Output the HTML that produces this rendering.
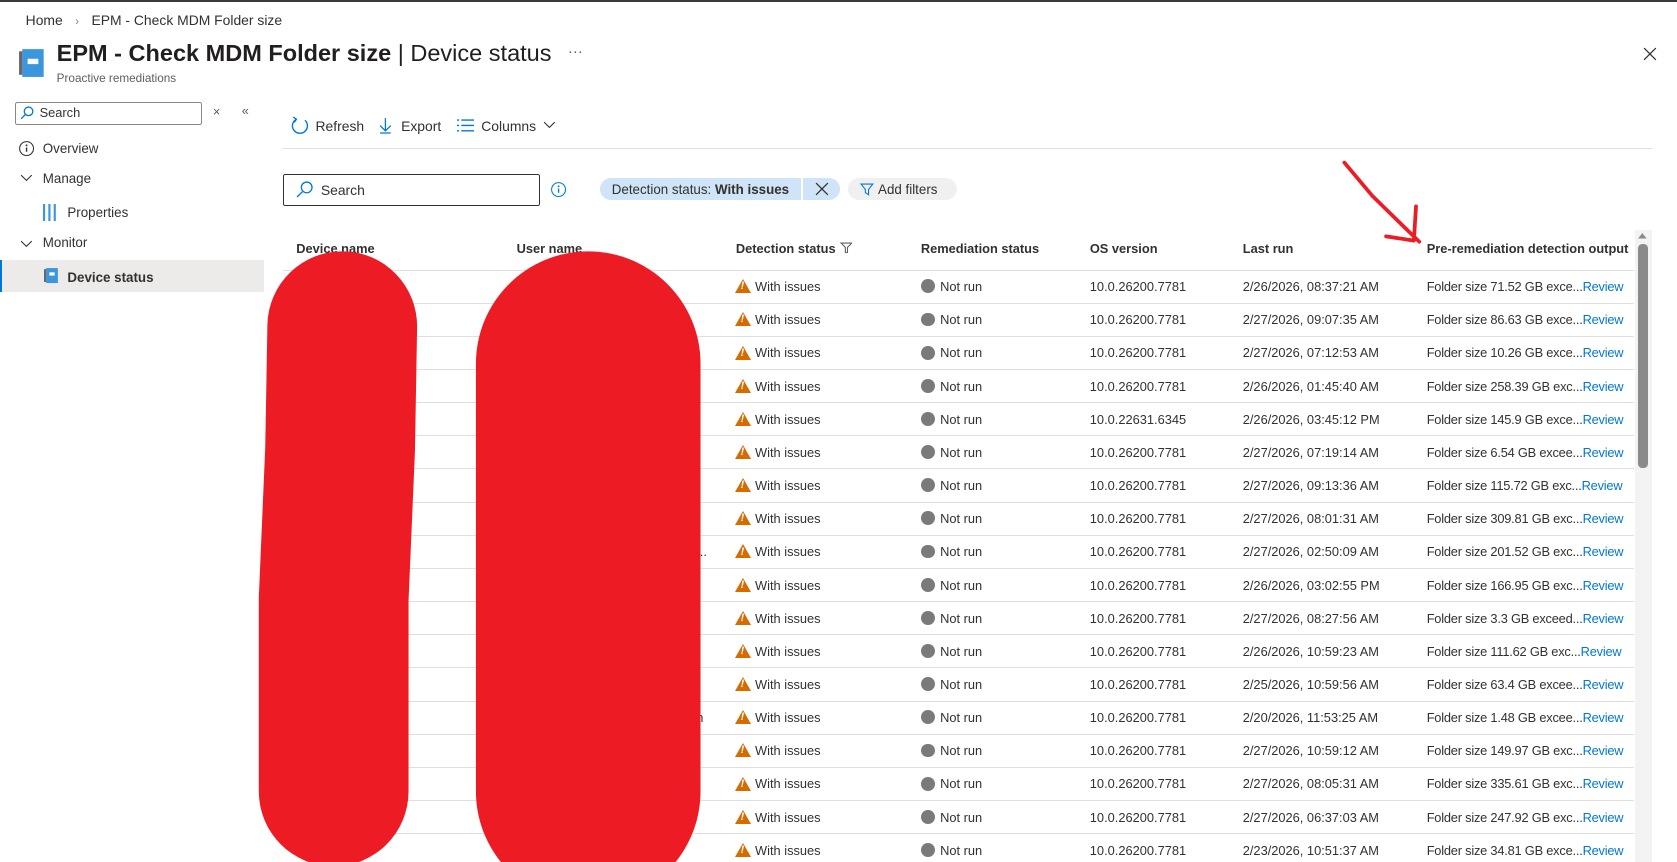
<!DOCTYPE html>
<html><head><meta charset="utf-8"><style>
html,body{margin:0;padding:0;background:#fff;overflow:hidden;width:1677px;height:862px}
#w{zoom:1.0695;position:relative;width:1568px;height:806px;font-family:"Liberation Sans",sans-serif;color:#323130;font-size:12px}
.a{position:absolute;white-space:nowrap}
.row{position:absolute;left:265px;width:1263px;height:31px;border-bottom:1px solid #e1dfdd;box-sizing:border-box}
.row span{position:absolute;top:8px;white-space:nowrap}
.warn{display:inline-block;width:0;height:0;border-left:8px solid transparent;border-right:8px solid transparent;border-bottom:14px solid #d86b00;vertical-align:-2px;margin-right:4px;position:relative}
.warn:after{content:"!";position:absolute;left:-2px;top:1px;color:#fff;font-size:10px;font-weight:bold}
.dot{display:inline-block;width:13px;height:13px;border-radius:50%;background:#7a7a7a;vertical-align:-2px;margin-right:5px}
.rv{color:#0078d4;font-weight:normal}
.o{letter-spacing:-0.2px}
</style></head><body><div id="w">
<div class="a" style="left:0;top:0;width:1568px;height:2px;background:#3b3b3b"></div>
<div class="a" style="left:24px;top:11px;font-size:13px">Home <span style="color:#8a8886;margin:0 8px;font-size:11px">›</span> EPM - Check MDM Folder size</div>
<svg class="a" style="left:17px;top:44px" width="26" height="30"><rect x="4" y="2" width="20" height="26" fill="#3a96dd"/><rect x="1" y="4" width="3" height="22" fill="#666"/><rect x="9" y="11" width="10" height="5" fill="#fff"/></svg>
<div class="a" style="left:53px;top:37px;font-size:22px;color:#201f1e"><b>EPM - Check MDM Folder size</b> | Device status</div>
<div class="a" style="left:53px;top:67px;font-size:11px;color:#605e5c">Proactive remediations</div>
<div class="a" style="left:531px;top:40px;font-size:14px;color:#605e5c">···</div>
<svg class="a" style="left:1536px;top:44px" width="13" height="13"><path d="M1 1L12 12M12 1L1 12" stroke="#323130" stroke-width="1.2"/></svg>
<div class="a" style="left:14px;top:95px;width:173px;height:20px;border:1px solid #8a8886;border-radius:2px"></div>
<svg class="a" style="left:19px;top:99px" width="13" height="13"><circle cx="8" cy="5" r="4" fill="none" stroke="#0078d4" stroke-width="1.2"/><path d="M5 8L1 12" stroke="#0078d4" stroke-width="1.2"/></svg>
<div class="a" style="left:37px;top:98px;font-size:12px">Search</div>
<div class="a" style="left:199px;top:97px;color:#605e5c">×</div>
<div class="a" style="left:226px;top:96px;color:#605e5c">«</div>
<svg class="a" style="left:17px;top:131px" width="16" height="16"><circle cx="8" cy="8" r="6.5" fill="none" stroke="#323130"/><path d="M8 7v4" stroke="#323130" stroke-width="1.3"/><circle cx="8" cy="5" r=".9" fill="#323130"/></svg>
<div class="a" style="left:40px;top:132px;font-size:12.5px">Overview</div>
<svg class="a" style="left:19px;top:163px" width="12" height="8"><path d="M1 1L6 6L11 1" fill="none" stroke="#323130"/></svg>
<div class="a" style="left:40px;top:160px;font-size:12.5px">Manage</div>
<svg class="a" style="left:40px;top:191px" width="12" height="16"><rect x="0" y="0" width="2" height="16" fill="#3a96dd"/><rect x="5" y="0" width="2" height="16" fill="#3a96dd"/><rect x="10" y="0" width="2" height="16" fill="#3a96dd"/></svg>
<div class="a" style="left:63px;top:192px;font-size:12.5px">Properties</div>
<svg class="a" style="left:19px;top:224px" width="12" height="8"><path d="M1 1L6 6L11 1" fill="none" stroke="#323130"/></svg>
<div class="a" style="left:40px;top:220px;font-size:12.5px">Monitor</div>
<div class="a" style="left:0;top:243px;width:247px;height:30px;background:#edebe9;border-left:2px solid #0078d4;box-sizing:border-box"></div>
<svg class="a" style="left:41px;top:250px" width="13" height="16"><rect x="2" y="1" width="11" height="14" fill="#3a96dd"/><rect x="0" y="2" width="2" height="12" fill="#666"/><rect x="5" y="5" width="5" height="3" fill="#fff"/></svg>
<div class="a" style="left:63px;top:252px;font-size:12.5px"><b style="font-weight:600">Device status</b></div>
<svg class="a" style="left:271px;top:108px" width="18" height="18"><path d="M14 4A7 7 0 1 1 6 3" fill="none" stroke="#0078d4" stroke-width="1.3"/><path d="M3 1L6 3L4 6" fill="none" stroke="#0078d4" stroke-width="1.3"/></svg>
<div class="a" style="left:295px;top:110px;font-size:13px">Refresh</div>
<svg class="a" style="left:354px;top:109px" width="12" height="16"><path d="M6 1V13M1 8L6 13L11 8M1 15H11" fill="none" stroke="#0078d4" stroke-width="1.2"/></svg>
<div class="a" style="left:375px;top:110px;font-size:13px">Export</div>
<svg class="a" style="left:427px;top:111px" width="16" height="12"><path d="M0 1H2M4 1H16M0 6H2M4 6H16M0 11H2M4 11H16" stroke="#0078d4" stroke-width="1.3"/></svg>
<div class="a" style="left:450px;top:110px;font-size:13px">Columns</div>
<svg class="a" style="left:508px;top:113px" width="12" height="8"><path d="M1 1L6 6L11 1" fill="none" stroke="#323130"/></svg>
<div class="a" style="left:265px;top:138px;width:1280px;height:1px;background:#e1dfdd"></div>
<div class="a" style="left:265px;top:163px;width:238px;height:28px;border:1px solid #323130;border-radius:2px"></div>
<svg class="a" style="left:277px;top:169px" width="16" height="16"><circle cx="10" cy="6" r="5" fill="none" stroke="#0078d4" stroke-width="1.2"/><path d="M6 10L1 15" stroke="#0078d4" stroke-width="1.3"/></svg>
<div class="a" style="left:300px;top:170px;font-size:13px">Search</div>
<svg class="a" style="left:514px;top:169px" width="16" height="16"><circle cx="8" cy="8" r="6.5" fill="none" stroke="#0078d4"/><path d="M8 7v4" stroke="#0078d4" stroke-width="1.3"/><circle cx="8" cy="5" r=".9" fill="#0078d4"/></svg>
<div class="a" style="left:561px;top:166px;width:188px;height:21px;background:#cfe4f6;border-radius:11px 0 0 11px"></div>
<div class="a" style="left:572px;top:170px;font-size:12.5px">Detection status: <b>With issues</b></div>
<div class="a" style="left:751px;top:166px;width:34px;height:21px;background:#cfe4f6;border-radius:0 11px 11px 0"></div>
<svg class="a" style="left:762px;top:170px" width="13" height="13"><path d="M1 1L12 12M12 1L1 12" stroke="#323130" stroke-width="1.2"/></svg>
<div class="a" style="left:793px;top:166px;width:102px;height:21px;background:#f0f0f0;border-radius:11px"></div>
<svg class="a" style="left:804px;top:171px" width="13" height="12"><path d="M1 1H12L8 6V11L5 9V6Z" fill="none" stroke="#0078d4"/></svg>
<div class="a" style="left:821px;top:170px;font-size:12.5px">Add filters</div>
<div class="a" style="left:277px;top:225px;font-size:12px;font-weight:600">Device name</div>
<div class="a" style="left:483px;top:225px;font-size:12px;font-weight:600">User name</div>
<div class="a" style="left:688px;top:225px;font-size:12px;font-weight:600">Detection status</div>
<svg class="a" style="left:785px;top:226px" width="12" height="11"><path d="M1 1H11L7 5V10H5V5Z" fill="none" stroke="#605e5c"/></svg>
<div class="a" style="left:861px;top:225px;font-size:12px;font-weight:600">Remediation status</div>
<div class="a" style="left:1019px;top:225px;font-size:12px;font-weight:600">OS version</div>
<div class="a" style="left:1162px;top:225px;font-size:12px;font-weight:600">Last run</div>
<div class="a" style="left:1334px;top:225px;font-size:12px;font-weight:600">Pre-remediation detection output</div>
<div class="a" style="left:265px;top:252px;width:1263px;height:1px;background:#e1dfdd"></div>

<div class="row" style="top:253px"><span style="left:422px"><i class="warn"></i>With issues</span><span style="left:596px"><i class="dot"></i>Not run</span><span style="left:754px">10.0.26200.7781</span><span style="left:897px">2/26/2026, 08:37:21 AM</span><span class="o" style="left:1069px">Folder size 71.52 GB exce...<b class="rv">Review</b></span></div>
<div class="row" style="top:284px"><span style="left:422px"><i class="warn"></i>With issues</span><span style="left:596px"><i class="dot"></i>Not run</span><span style="left:754px">10.0.26200.7781</span><span style="left:897px">2/27/2026, 09:07:35 AM</span><span class="o" style="left:1069px">Folder size 86.63 GB exce...<b class="rv">Review</b></span></div>
<div class="row" style="top:315px"><span style="left:422px"><i class="warn"></i>With issues</span><span style="left:596px"><i class="dot"></i>Not run</span><span style="left:754px">10.0.26200.7781</span><span style="left:897px">2/27/2026, 07:12:53 AM</span><span class="o" style="left:1069px">Folder size 10.26 GB exce...<b class="rv">Review</b></span></div>
<div class="row" style="top:346px"><span style="left:422px"><i class="warn"></i>With issues</span><span style="left:596px"><i class="dot"></i>Not run</span><span style="left:754px">10.0.26200.7781</span><span style="left:897px">2/26/2026, 01:45:40 AM</span><span class="o" style="left:1069px">Folder size 258.39 GB exc...<b class="rv">Review</b></span></div>
<div class="row" style="top:377px"><span style="left:422px"><i class="warn"></i>With issues</span><span style="left:596px"><i class="dot"></i>Not run</span><span style="left:754px">10.0.22631.6345</span><span style="left:897px">2/26/2026, 03:45:12 PM</span><span class="o" style="left:1069px">Folder size 145.9 GB exce...<b class="rv">Review</b></span></div>
<div class="row" style="top:408px"><span style="left:422px"><i class="warn"></i>With issues</span><span style="left:596px"><i class="dot"></i>Not run</span><span style="left:754px">10.0.26200.7781</span><span style="left:897px">2/27/2026, 07:19:14 AM</span><span class="o" style="left:1069px">Folder size 6.54 GB excee...<b class="rv">Review</b></span></div>
<div class="row" style="top:439px"><span style="left:422px"><i class="warn"></i>With issues</span><span style="left:596px"><i class="dot"></i>Not run</span><span style="left:754px">10.0.26200.7781</span><span style="left:897px">2/27/2026, 09:13:36 AM</span><span class="o" style="left:1069px">Folder size 115.72 GB exc...<b class="rv">Review</b></span></div>
<div class="row" style="top:470px"><span style="left:422px"><i class="warn"></i>With issues</span><span style="left:596px"><i class="dot"></i>Not run</span><span style="left:754px">10.0.26200.7781</span><span style="left:897px">2/27/2026, 08:01:31 AM</span><span class="o" style="left:1069px">Folder size 309.81 GB exc...<b class="rv">Review</b></span></div>
<div class="row" style="top:501px"><span style="left:422px"><i class="warn"></i>With issues</span><span style="left:596px"><i class="dot"></i>Not run</span><span style="left:754px">10.0.26200.7781</span><span style="left:897px">2/27/2026, 02:50:09 AM</span><span class="o" style="left:1069px">Folder size 201.52 GB exc...<b class="rv">Review</b></span><span style="left:386px">...</span></div>
<div class="row" style="top:532px"><span style="left:422px"><i class="warn"></i>With issues</span><span style="left:596px"><i class="dot"></i>Not run</span><span style="left:754px">10.0.26200.7781</span><span style="left:897px">2/26/2026, 03:02:55 PM</span><span class="o" style="left:1069px">Folder size 166.95 GB exc...<b class="rv">Review</b></span></div>
<div class="row" style="top:563px"><span style="left:422px"><i class="warn"></i>With issues</span><span style="left:596px"><i class="dot"></i>Not run</span><span style="left:754px">10.0.26200.7781</span><span style="left:897px">2/27/2026, 08:27:56 AM</span><span class="o" style="left:1069px">Folder size 3.3 GB exceed...<b class="rv">Review</b></span></div>
<div class="row" style="top:594px"><span style="left:422px"><i class="warn"></i>With issues</span><span style="left:596px"><i class="dot"></i>Not run</span><span style="left:754px">10.0.26200.7781</span><span style="left:897px">2/26/2026, 10:59:23 AM</span><span class="o" style="left:1069px">Folder size 111.62 GB exc...<b class="rv">Review</b></span></div>
<div class="row" style="top:625px"><span style="left:422px"><i class="warn"></i>With issues</span><span style="left:596px"><i class="dot"></i>Not run</span><span style="left:754px">10.0.26200.7781</span><span style="left:897px">2/25/2026, 10:59:56 AM</span><span class="o" style="left:1069px">Folder size 63.4 GB excee...<b class="rv">Review</b></span></div>
<div class="row" style="top:656px"><span style="left:422px"><i class="warn"></i>With issues</span><span style="left:596px"><i class="dot"></i>Not run</span><span style="left:754px">10.0.26200.7781</span><span style="left:897px">2/20/2026, 11:53:25 AM</span><span class="o" style="left:1069px">Folder size 1.48 GB excee...<b class="rv">Review</b></span><span style="left:386px">n</span></div>
<div class="row" style="top:687px"><span style="left:422px"><i class="warn"></i>With issues</span><span style="left:596px"><i class="dot"></i>Not run</span><span style="left:754px">10.0.26200.7781</span><span style="left:897px">2/27/2026, 10:59:12 AM</span><span class="o" style="left:1069px">Folder size 149.97 GB exc...<b class="rv">Review</b></span></div>
<div class="row" style="top:718px"><span style="left:422px"><i class="warn"></i>With issues</span><span style="left:596px"><i class="dot"></i>Not run</span><span style="left:754px">10.0.26200.7781</span><span style="left:897px">2/27/2026, 08:05:31 AM</span><span class="o" style="left:1069px">Folder size 335.61 GB exc...<b class="rv">Review</b></span></div>
<div class="row" style="top:749px"><span style="left:422px"><i class="warn"></i>With issues</span><span style="left:596px"><i class="dot"></i>Not run</span><span style="left:754px">10.0.26200.7781</span><span style="left:897px">2/27/2026, 06:37:03 AM</span><span class="o" style="left:1069px">Folder size 247.92 GB exc...<b class="rv">Review</b></span></div>
<div class="row" style="top:780px"><span style="left:422px"><i class="warn"></i>With issues</span><span style="left:596px"><i class="dot"></i>Not run</span><span style="left:754px">10.0.26200.7781</span><span style="left:897px">2/23/2026, 10:51:37 AM</span><span class="o" style="left:1069px">Folder size 34.81 GB exce...<b class="rv">Review</b></span></div>

<div class="a" style="left:1529px;top:215px;width:16px;height:591px;background:#f3f3f3"></div>
<div class="a" style="left:1532px;top:228px;width:9px;height:210px;background:#8a8a8a;border-radius:4px"></div>
<svg class="a" style="left:1531px;top:216px" width="10" height="8"><path d="M1 7L5 2L9 7Z" fill="#8a8a8a"/></svg>

<svg class="a" style="left:0;top:0" width="1568" height="806">
<g stroke="#ed1c24" stroke-linecap="round" stroke-linejoin="round" fill="none">
<path d="M320 305L318 420L312 560L312 740" stroke-width="140"/>
<path d="M550 340L550 740" stroke-width="210"/>
<path d="M1257 152L1283 183L1327 226M1296 221L1322 225L1324 193" stroke-width="3.5"/>
</g></svg>
</div></body></html>
